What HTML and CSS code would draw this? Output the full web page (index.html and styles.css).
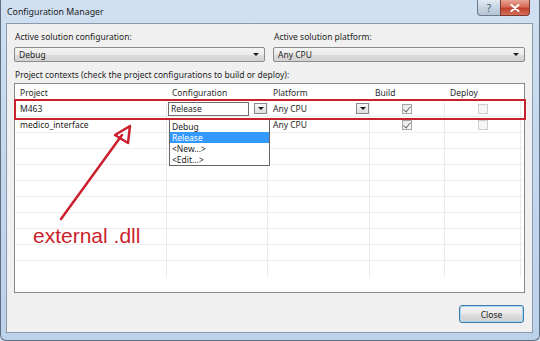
FILE: index.html
```html
<!DOCTYPE html>
<html>
<head>
<meta charset="utf-8">
<link rel="stylesheet" href="styles.css">
</head>
<body>
<div class="window">
  <div class="titlebar">
    <span class="title">Configuration Manager</span>
    <div class="caption-buttons">
      <span class="cap-btn help">?</span>
      <span class="cap-btn close-x">
        <svg width="10" height="8" viewBox="0 0 10 8"><path d="M1.5 1 L8.5 7 M8.5 1 L1.5 7" stroke="#fff" stroke-width="2" stroke-linecap="round"/></svg>
      </span>
    </div>
  </div>
  <div class="client">
    <div class="top-row">
      <div class="field">
        <div class="label">Active solution configuration:</div>
        <div class="combo"><span>Debug</span><span class="arrow"></span></div>
      </div>
      <div class="field">
        <div class="label">Active solution platform:</div>
        <div class="combo"><span>Any CPU</span><span class="arrow"></span></div>
      </div>
    </div>
    <div class="label contexts">Project contexts (check the project configurations to build or deploy):</div>
    <div class="table">
      <div class="row head">
        <div class="cell">Project</div>
        <div class="cell">Configuration</div>
        <div class="cell">Platform</div>
        <div class="cell">Build</div>
        <div class="cell">Deploy</div>
      </div>
      <div class="row">
        <div class="cell">M463</div>
        <div class="cell edit">
          <span class="editbox">Release</span><span class="dd-btn"><span class="arrow"></span></span>
        </div>
        <div class="cell plat">
          <span class="plat-text">Any CPU</span><span class="dd-btn"><span class="arrow"></span></span>
        </div>
        <div class="cell center"><span class="check on"></span></div>
        <div class="cell center"><span class="check off"></span></div>
      </div>
      <div class="row">
        <div class="cell">medico_interface</div>
        <div class="cell"></div>
        <div class="cell">Any CPU</div>
        <div class="cell center"><span class="check on"></span></div>
        <div class="cell center"><span class="check off"></span></div>
      </div>
      <div class="row"><div class="cell"></div><div class="cell"></div><div class="cell"></div><div class="cell"></div><div class="cell"></div></div>
      <div class="row"><div class="cell"></div><div class="cell"></div><div class="cell"></div><div class="cell"></div><div class="cell"></div></div>
      <div class="row"><div class="cell"></div><div class="cell"></div><div class="cell"></div><div class="cell"></div><div class="cell"></div></div>
      <div class="row"><div class="cell"></div><div class="cell"></div><div class="cell"></div><div class="cell"></div><div class="cell"></div></div>
      <div class="row"><div class="cell"></div><div class="cell"></div><div class="cell"></div><div class="cell"></div><div class="cell"></div></div>
      <div class="row"><div class="cell"></div><div class="cell"></div><div class="cell"></div><div class="cell"></div><div class="cell"></div></div>
      <div class="row"><div class="cell"></div><div class="cell"></div><div class="cell"></div><div class="cell"></div><div class="cell"></div></div>
      <div class="row"><div class="cell"></div><div class="cell"></div><div class="cell"></div><div class="cell"></div><div class="cell"></div></div>
      <div class="row last"><div class="cell"></div><div class="cell"></div><div class="cell"></div><div class="cell"></div><div class="cell"></div></div>
    </div>
    <div class="footer">
      <button class="close-btn">Close</button>
    </div>
  </div>

  <div class="dropdown-list">
    <div class="item">Debug</div>
    <div class="item sel">Release</div>
    <div class="item">&lt;New...&gt;</div>
    <div class="item">&lt;Edit...&gt;</div>
  </div>

  <div class="redbox"></div>

  <svg class="annot" width="540" height="341" viewBox="0 0 540 341">
    <line x1="60" y1="219" x2="121" y2="135" stroke="#cc1f2d" stroke-width="2.5" stroke-linecap="round"/>
    <polygon points="129,126 114,135 127,143" fill="none" stroke="#cc1f2d" stroke-width="2.5" stroke-linejoin="round"/>
  </svg>
  <div class="annot-text">external .dll</div>
</div>
</body>
</html>
```

FILE: styles.css
```css
* { box-sizing: border-box; }
html, body { margin: 0; padding: 0; }
body {
  width: 540px;
  height: 341px;
  overflow: hidden;
  background: #d6e3f1;
  font-family: "Noto Sans", "Open Sans", sans-serif;
  font-size: 8.5px;
  color: #1e1e1e;
}
.window {
  position: relative;
  width: 540px;
  height: 341px;
  display: flex;
  flex-direction: column;
  padding: 0 6px 7px 5px;
  border: 1px solid #5f6f82;
  border-top: none;
  border-radius: 0 0 6px 6px;
  background: linear-gradient(180deg, #d0e0f2 0%, #c5d8ee 40%, #bcd1ea 100%);
}
.titlebar {
  height: 23px;
  display: flex;
  align-items: flex-start;
  justify-content: space-between;
}
.title {
  margin-top: 6px;
  margin-left: 1px;
  font-size: 8.8px;
  color: #1b1b1b;
}
.caption-buttons {
  display: flex;
  margin-right: 3px;
}
.cap-btn {
  height: 16px;
  display: flex;
  align-items: center;
  justify-content: center;
  border: 1px solid #6d7c8c;
  border-top: none;
}
.help {
  width: 23px;
  border-radius: 0 0 0 4px;
  background: linear-gradient(180deg, #e3ebf4 0%, #c7d4e2 50%, #b4c4d6 100%);
  color: #4a5868;
  font-size: 10px;
  border-right: none;
}
.close-x {
  width: 30px;
  border-radius: 0 0 4px 0;
  background: linear-gradient(180deg, #e8a595 0%, #d46b58 45%, #c0412c 55%, #d4705c 100%);
  border-color: #7a3a30;
}
.client {
  flex: 1;
  display: flex;
  flex-direction: column;
  background: #f0f0f0;
  border: 1px solid #8c9aab;
  padding: 6px 7px 0 7px;
}
.top-row {
  display: grid;
  grid-template-columns: 251px 252px;
  gap: 8px;
}
.label {
  height: 14px;
  line-height: 14px;
  padding-left: 1px;
  white-space: nowrap;
}
.combo {
  margin-top: 3px;
  height: 15px;
  display: flex;
  align-items: center;
  justify-content: space-between;
  padding: 0 5px 0 4px;
  border: 1px solid #8b8b8b;
  border-radius: 2px;
  background: linear-gradient(180deg, #f4f4f4 0%, #ebebeb 50%, #dddddd 51%, #d2d2d2 100%);
}
.arrow {
  width: 0;
  height: 0;
  border-left: 3px solid transparent;
  border-right: 3px solid transparent;
  border-top: 3px solid #1a1a1a;
}
.contexts { margin-top: 6px; }
.table {
  margin-top: 1px;
  height: 210px;
  width: 511px;
  background: #fff;
  border: 1px solid #828790;
  padding-top: 1px;
  overflow: hidden;
}
.row {
  display: grid;
  grid-template-columns: 152px 101px 102px 75px 76px;
  height: 16px;
  border-bottom: 1px solid #eeeeee;
}
.row.head { border-bottom: 1px solid #ffffff; height: 16px; }
.row.last { border-bottom: none; }
.cell {
  display: flex;
  align-items: center;
  padding-left: 5px;
  border-right: 1px solid #ebebeb;
  white-space: nowrap;
}
.head .cell { border-right: none; color: #2a2a2a; }
.cell.center { justify-content: center; padding-left: 0; }
.cell.edit { padding-left: 1px; }
.editbox {
  width: 82px;
  height: 14px;
  line-height: 12px;
  border: 1px solid #6e6e6e;
  padding-left: 2px;
  background: #fff;
}
.dd-btn {
  margin-left: 5px;
  width: 13px;
  height: 11px;
  display: flex;
  align-items: center;
  justify-content: center;
  border: 1px solid #8a8a8a;
  background: linear-gradient(180deg, #f7f7f7, #dedede);
}
.plat-text { width: 79px; }
.check {
  width: 10px;
  height: 10px;
  border: 1px solid #a6a6a6;
  background: linear-gradient(135deg, #e6e6e6, #fbfbfb);
  position: relative;
}
.check.off { border-color: #d0d0d0; background: #f6f6f6; }
.check.on::after {
  content: "";
  position: absolute;
  left: 2px;
  top: 0px;
  width: 3px;
  height: 6px;
  border-right: 1.5px solid #6f6f6f;
  border-bottom: 1.5px solid #6f6f6f;
  transform: rotate(40deg);
}
.footer {
  display: flex;
  justify-content: flex-end;
  padding-right: 1px;
  margin-top: 12px;
}
.close-btn {
  width: 65px;
  height: 18px;
  font-family: "Noto Sans", "Open Sans", sans-serif;
  font-size: 8.5px;
  color: #1e1e1e;
  border: 1px solid #3d7bad;
  border-radius: 3px;
  background: linear-gradient(180deg, #f2f2f2 0%, #ebebeb 45%, #dddddd 55%, #cfcfcf 100%);
  box-shadow: inset 0 0 0 1px #a8d8f0;
  padding: 0;
}
.dropdown-list {
  position: absolute;
  left: 168px;
  top: 119px;
  width: 101px;
  height: 47px;
  background: #fff;
  border: 1px solid #646464;
  padding-top: 1px;
}
.item {
  height: 11px;
  line-height: 11px;
  padding-left: 2px;
  overflow: hidden;
}
.item.sel {
  background: #3399ff;
  color: #fff;
}
.redbox {
  position: absolute;
  left: 13px;
  top: 99px;
  width: 512px;
  height: 21px;
  border: 2px solid #c8202f;
}
.annot {
  position: absolute;
  left: 0;
  top: 0;
  pointer-events: none;
}
.annot-text {
  position: absolute;
  left: 32px;
  top: 225px;
  font-family: "Liberation Sans", Arial, sans-serif;
  font-size: 21px;
  line-height: 21px;
  color: #cc1f2d;
}
```
